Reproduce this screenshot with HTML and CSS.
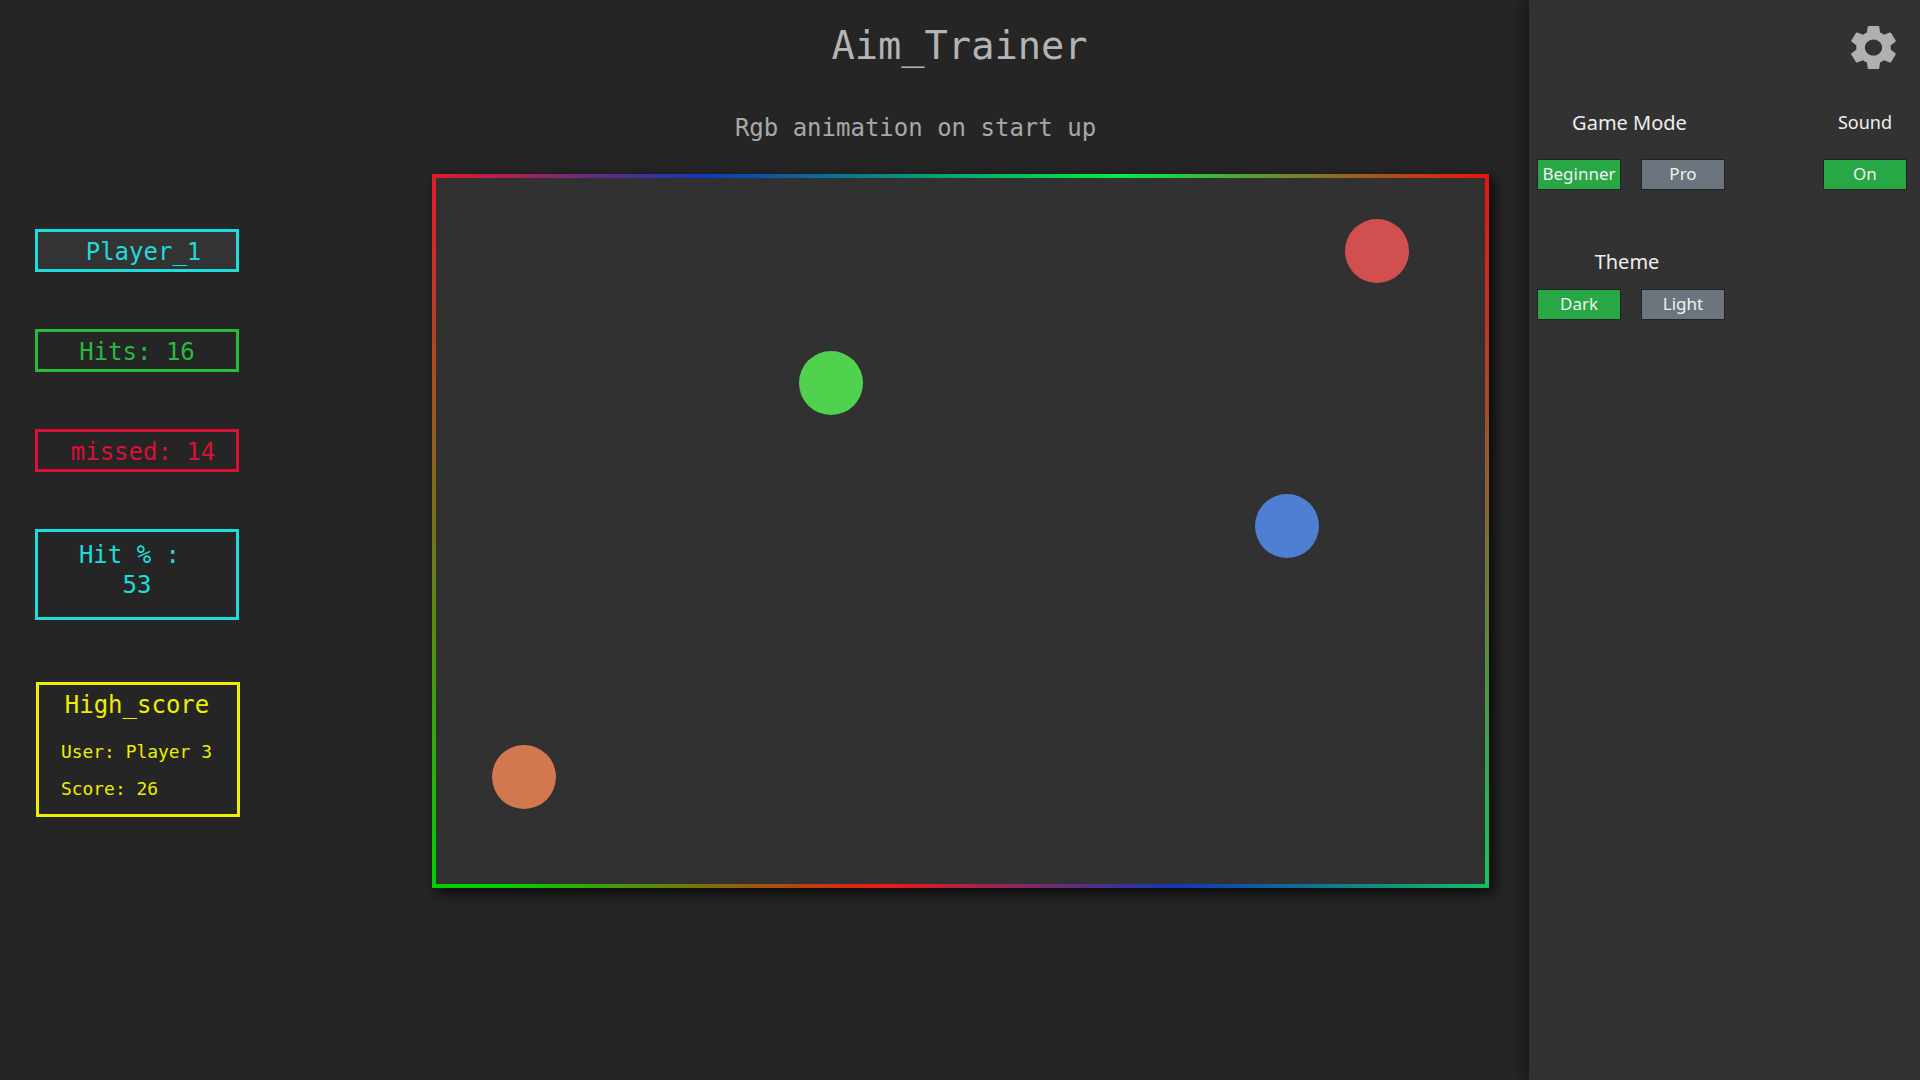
FILE: index.html
```html
<!DOCTYPE html>
<html lang="en">
<head>
<meta charset="utf-8">
<title>Aim_Trainer</title>
<link rel="stylesheet" href="styles.css">
</head>
<body>
<main class="main">
  <section class="stats">
    <div class="card card-player">Player_1</div>
    <div class="card card-hits">Hits: 16</div>
    <div class="card card-missed">missed: 14</div>
    <div class="card card-percent"><span class="percent-label">Hit % :</span><span>53</span></div>
    <div class="card card-high">
      <div class="high-title">High_score</div>
      <div class="high-line">User: Player 3</div>
      <div class="high-line">Score: 26</div>
    </div>
  </section>
  <section class="stage">
    <h1 class="title">Aim_Trainer</h1>
    <p class="subtitle">Rgb animation on start up</p>
    <div class="arena">
      <span class="target target-red"></span>
      <span class="target target-green"></span>
      <span class="target target-blue"></span>
      <span class="target target-orange"></span>
    </div>
  </section>
</main>
<aside class="panel">
  <div class="gear-row">
    <svg class="gear" viewBox="2.6 2 18.8 20" preserveAspectRatio="none" aria-hidden="true"><path fill-rule="evenodd" d="M19.14 12.94c.04-.3.06-.61.06-.94 0-.32-.02-.64-.07-.94l2.03-1.58c.18-.14.23-.41.12-.61l-1.92-3.32c-.12-.22-.37-.29-.59-.22l-2.39.96c-.5-.38-1.03-.7-1.62-.94l-.36-2.54c-.04-.24-.24-.41-.48-.41h-3.84c-.24 0-.43.17-.47.41l-.36 2.54c-.59.24-1.13.57-1.62.94l-2.39-.96c-.22-.08-.47 0-.59.22L2.74 8.87c-.12.21-.08.47.12.61l2.03 1.58c-.05.3-.09.63-.09.94s.02.64.07.94l-2.03 1.58c-.18.14-.23.41-.12.61l1.92 3.32c.12.22.37.29.59.22l2.39-.96c.5.38 1.03.7 1.62.94l.36 2.54c.05.24.24.41.48.41h3.84c.24 0 .44-.17.47-.41l.36-2.54c.59-.24 1.13-.56 1.62-.94l2.39.96c.22.08.47 0 .59-.22l1.92-3.32c.12-.22.07-.47-.12-.61l-2.01-1.58zM12 15.6c-1.98 0-3.6-1.62-3.6-3.6s1.62-3.6 3.6-3.6 3.6 1.62 3.6 3.6-1.62 3.6-3.6 3.6z"/></svg>
  </div>
  <div class="settings-row">
    <div class="group">
      <div class="group-label">Game Mode</div>
      <div class="buttons">
        <button class="btn btn-on">Beginner</button>
        <button class="btn btn-off">Pro</button>
      </div>
    </div>
    <div class="group">
      <div class="group-label label-small">Sound</div>
      <div class="buttons">
        <button class="btn btn-on">On</button>
      </div>
    </div>
  </div>
  <div class="settings-row row-theme">
    <div class="group">
      <div class="group-label label-theme">Theme</div>
      <div class="buttons">
        <button class="btn btn-on">Dark</button>
        <button class="btn btn-off">Light</button>
      </div>
    </div>
  </div>
</aside>
</body>
</html>
```
FILE: styles.css
```css
* { box-sizing: border-box; }
html, body { margin: 0; height: 100%; }
body {
  display: flex;
  width: 1920px;
  height: 1080px;
  overflow: hidden;
  background: #252525;
  font-family: "DejaVu Sans Mono", monospace;
}
.main {
  flex: 1;
  display: flex;
  min-width: 0;
}
.stats {
  width: 432px;
  padding: 229px 0 0 35px;
  display: flex;
  flex-direction: column;
}
.card {
  width: 204px;
  height: 43px;
  margin-bottom: 57px;
  padding-top: 2px;
  border: 3px solid currentColor;
  font-size: 24px;
  line-height: 37px;
  text-align: center;
}
.card-player { color: #1fdcdc; background: #333; padding-left: 13px; }
.card-hits { color: #27bb3e; }
.card-missed { color: #dc1034; padding-left: 12px; }
.card-percent {
  color: #1fdcdc;
  height: 91px;
  margin-bottom: 62px;
  padding-top: 8px;
  line-height: 30px;
  display: flex;
  flex-direction: column;
}
.percent-label { padding-right: 15px; }
.card-high {
  color: #eeee00;
  width: 204px;
  height: 135px;
  margin-left: 1px;
  margin-bottom: 0;
  padding-top: 0;
  line-height: 1;
}
.high-title { padding-top: 8px; padding-right: 2px; }
.high-line {
  font-size: 17.92px;
  text-align: left;
  padding-left: 22px;
  line-height: 20px;
}
.high-title + .high-line { margin-top: 25px; }
.high-line + .high-line { margin-top: 17px; }
.stage {
  width: 1057px;
  display: flex;
  flex-direction: column;
}
.title {
  margin: 0;
  padding: 23px 2px 0 0;
  font-size: 38.7px;
  line-height: 45px;
  font-weight: 400;
  text-align: center;
  color: #b4b4b4;
}
.subtitle {
  margin: 0;
  padding-top: 46px;
  padding-right: 90px;
  font-size: 24px;
  line-height: 28px;
  text-align: center;
  color: #a8a8a8;
}
.arena {
  position: relative;
  margin-top: 32px;
  width: 1057px;
  height: 714px;
  background-color: #313131;
  background-image:
    linear-gradient(90deg, #e8192c 0%, #1038b8 25.5%, #00f040 65%, #f01010 100%),
    linear-gradient(90deg, #00d000 0%, #00d000 7%, #f01818 43%, #1038b8 70.5%, #10c060 100%),
    linear-gradient(180deg, #e8192c 0%, #00d000 100%),
    linear-gradient(180deg, #f01010 0%, #10c860 100%);
  background-size: 100% 4px, 100% 4px, 4px 100%, 4px 100%;
  background-position: top left, bottom left, top left, top right;
  background-repeat: no-repeat;
  box-shadow: 5px 5px 12px rgba(0, 0, 0, 0.75);
}
.target {
  position: absolute;
  width: 64px;
  height: 64px;
  border-radius: 50%;
}
.target-red { left: 913px; top: 45px; background: #d24f4f; }
.target-green { left: 367px; top: 177px; background: #50d24f; }
.target-blue { left: 823px; top: 320px; background: #4f7fd2; }
.target-orange { left: 60px; top: 571px; background: #d2784f; }
.panel {
  width: 391px;
  height: 1080px;
  flex: none;
  padding: 25px 13px 0 8px;
  background: #323232;
  box-shadow: -6px 0 14px rgba(0, 0, 0, 0.35);
  font-family: "Noto Sans", sans-serif;
  color: #eee;
}
.gear-row {
  display: flex;
  justify-content: flex-end;
  padding-right: 11px;
}
.gear {
  width: 45px;
  height: 45px;
  fill: #b0b0b0;
}
.settings-row {
  display: flex;
  justify-content: space-between;
  margin-top: 39px;
}
.row-theme { margin-top: 58px; }
.group { display: flex; flex-direction: column; }
.group-label {
  font-size: 20px;
  line-height: 28px;
  text-align: center;
  margin-bottom: 22px;
  padding-right: 3px;
}
.label-small { font-size: 18px; padding-right: 0; margin-top: -1px; margin-bottom: 23px; }
.label-theme { padding-right: 8px; margin-bottom: 13px; }
.buttons {
  display: flex;
  gap: 20px;
}
.btn {
  width: 84px;
  height: 31px;
  padding: 0 0 3px;
  border: 1px solid #222;
  border-radius: 0;
  font-family: inherit;
  font-size: 17px;
  color: #f2f2f2;
}
.btn-on { background: #28a745; }
.btn-off { background: #6c757d; }
```
